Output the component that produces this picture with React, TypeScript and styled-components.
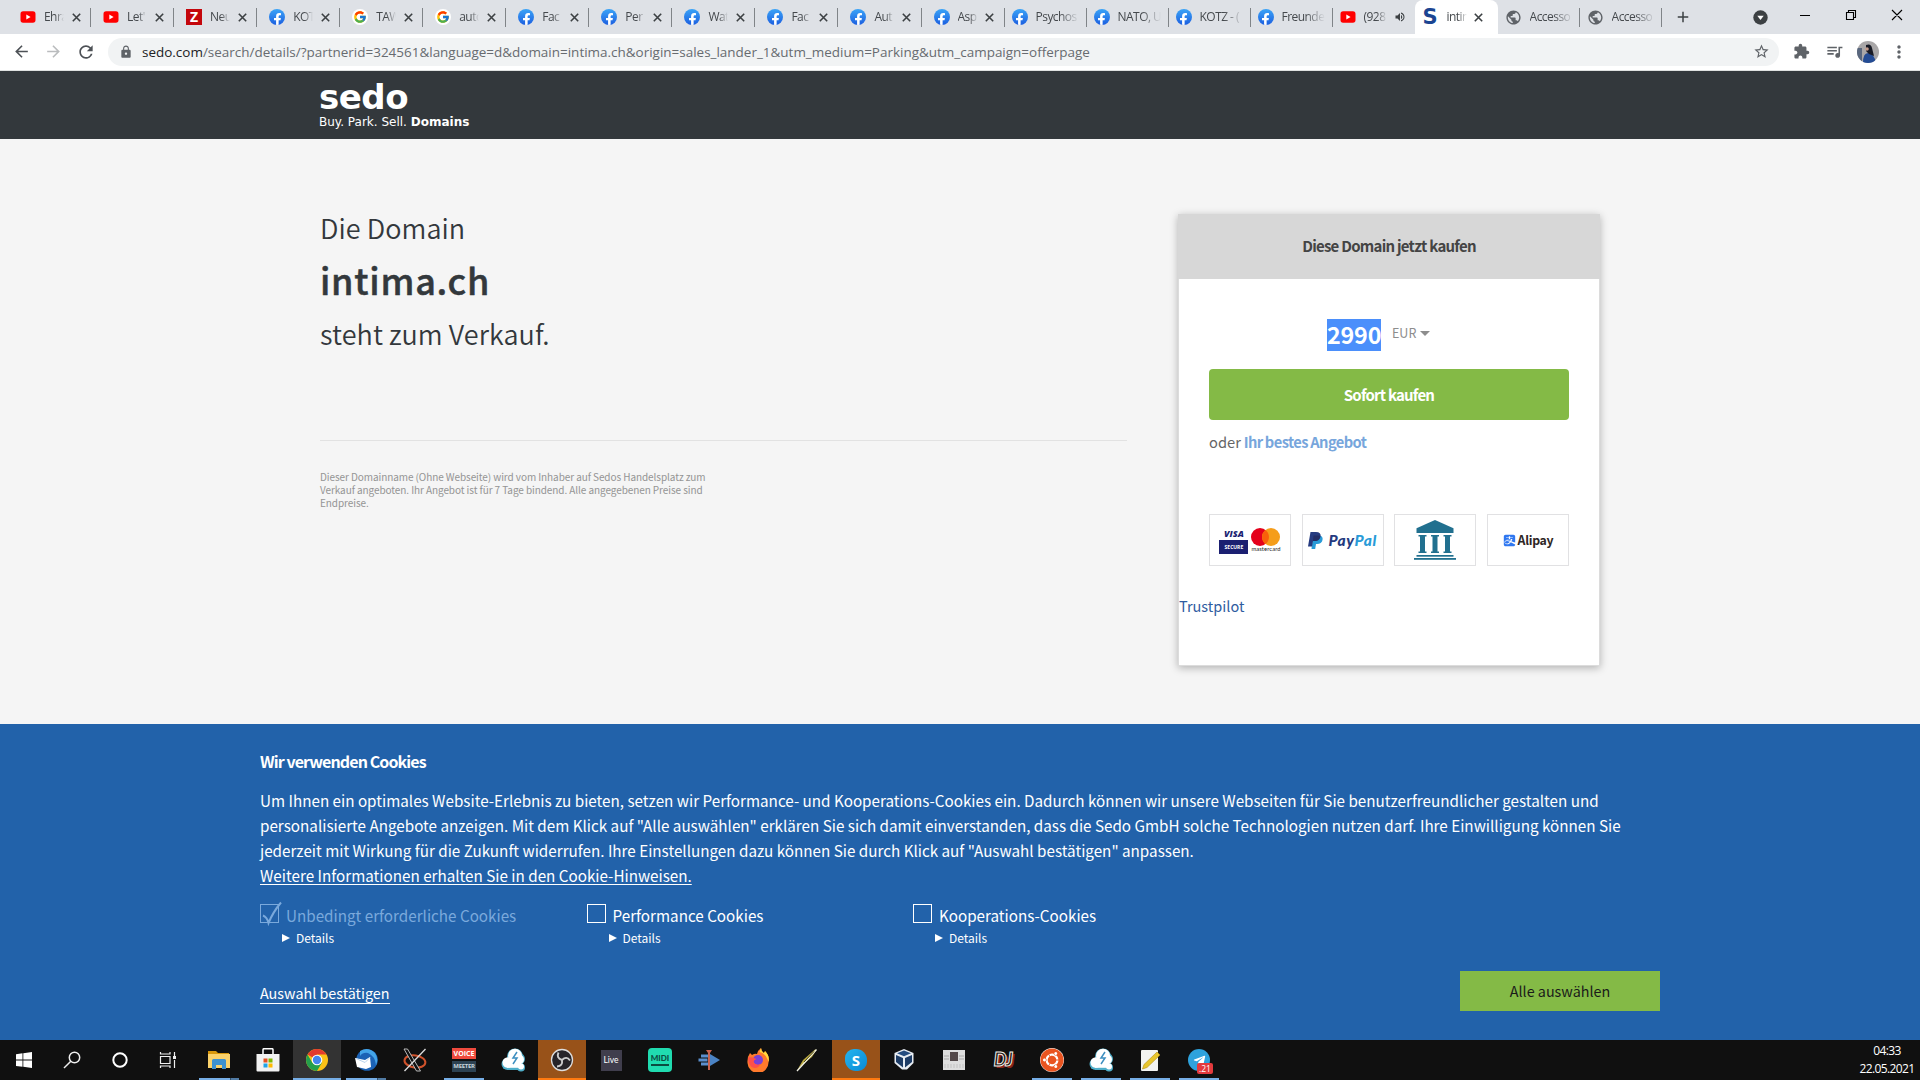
import React from "react";
import styled, { createGlobalStyle } from "styled-components";
import { MdArrowBack, MdArrowForward, MdRefresh, MdLock, MdStarBorder, MdExtension, MdQueueMusic, MdMoreVert, MdAdd, MdVolumeUp, MdPublic } from "react-icons/md";
import { FcGoogle } from "react-icons/fc";
import { FaFacebookF, FaAlipay, FaTelegramPlane, FaUbuntu } from "react-icons/fa";

const ui = `"Open Sans", "Noto Sans", sans-serif`;
const sans = `"Noto Sans CJK SC", "Noto Sans", sans-serif`;

const Global = createGlobalStyle`
  * { box-sizing: border-box; }
  body { margin: 0; background: #f5f5f5; overflow: hidden; font-family: ${sans}; }
  svg { display: block; flex: none; }
`;

const Screen = styled.div`
  width: 1920px;
  height: 1080px;
  display: flex;
  flex-direction: column;
  overflow: hidden;
`;

/* ---------- browser chrome ---------- */
const TabStrip = styled.div`
  height: 34px;
  flex: none;
  display: flex;
  background: #dee1e6;
  padding-left: 8px;
  font: 12px/34px ${ui};
  color: #45494d;
`;
const TabBox = styled.div<{ $wide: boolean; $active?: boolean; $line: boolean }>`
  width: ${(p) => (p.$wide ? 83.05 : 82)}px;
  height: 34px;
  display: flex;
  align-items: center;
  padding-left: ${(p) => (p.$active ? 8 : p.$wide ? 12 : 7)}px;
  background: ${(p) => (p.$active ? "#fff" : "none")};
  border-radius: ${(p) => (p.$active ? "8px 8px 0 0" : "0")};
  position: relative;
  &::after {
    content: "";
    display: ${(p) => (p.$line ? "block" : "none")};
    position: absolute;
    right: 0;
    top: 8px;
    width: 1px;
    height: 19px;
    background: #808488;
  }
`;
const TabLabel = styled.span<{ $w: number }>`
  width: ${(p) => p.$w}px;
  margin-left: 8px;
  white-space: nowrap;
  letter-spacing: -0.55px;
  mask-image: linear-gradient(to right, #000 55%, transparent 100%);
`;
const TabEnd = styled.span`
  margin-left: 7.5px;
  color: #3c4043;
`;
const StripButton = styled.span<{ $ml: number }>`
  margin-left: ${(p) => p.$ml}px;
  align-self: center;
  color: #3c4043;
`;
const Toolbar = styled.div`
  height: 37px;
  flex: none;
  display: flex;
  align-items: center;
  background: #fff;
  padding: 0 0 1px 12px;
  color: #5f6368;
  border-bottom: 1px solid #dfe1e0;
`;
const NavIcon = styled.span<{ $faded?: boolean }>`
  width: 32px;
  flex: none;
  display: flex;
  color: ${(p) => (p.$faded ? "#babcbe" : "#4d5156")};
`;
const Address = styled.div`
  width: 1671px;
  flex: none;
  height: 28px;
  margin-right: 14px;
  border-radius: 14px;
  background: #f1f3f4;
  display: flex;
  align-items: center;
  padding: 0 9px 0 11px;
  font: 13.48px/28px ${ui};
`;
const Url = styled.span`
  flex: 1;
  margin-left: 9px;
  color: #676b70;
  white-space: nowrap;
  b { font-weight: 400; color: #202124; }
`;
const ToolIcon = styled.span`
  width: 32px;
  flex: none;
  display: flex;
`;

/* ---------- page ---------- */
const SiteHeader = styled.header`
  height: 68px;
  flex: none;
  background: #33383c;
  padding: 9px 0 0 319px;
  color: #fff;
  font-family: "DejaVu Sans", Verdana, sans-serif;
`;
const Logo = styled.div`
  font-size: 34px;
  line-height: 34px;
  font-weight: 700;
  letter-spacing: -0.5px;
`;
const Slogan = styled.div`
  font-size: 12px;
  line-height: 14px;
  margin-top: 1px;
`;
const Main = styled.main`
  height: 585px;
  flex: none;
  display: flex;
  align-items: flex-start;
  background: #f5f5f5;
  padding-left: 320px;
`;
const Offer = styled.section`
  width: 807px;
  padding-top: 69px;
  color: #33383c;
`;
const Lead = styled.div<{ $ls: number }>`
  font-size: 27px;
  line-height: 40px;
  font-weight: 350;
  letter-spacing: ${(p) => p.$ls}px;
`;
const DomainName = styled.h1`
  margin: 6px 0 10px;
  font-size: 36px;
  line-height: 50px;
  font-weight: 500;
  letter-spacing: 0.75px;
  -webkit-text-stroke: 0.5px #33383c;
`;
const Legal = styled.p`
  margin: 86px 0 0;
  border-top: 1px solid #e2e2e2;
  padding-top: 29px;
  font-size: 10px;
  line-height: 13px;
  letter-spacing: -0.08px;
  color: #949494;
  white-space: nowrap;
`;
const Card = styled.aside`
  width: 422px;
  height: 452px;
  margin: 75px 0 0 51px;
  background: #fff;
  border: 1px solid #dcdcdc;
  box-shadow: 0 2px 8px rgba(0, 0, 0, 0.28);
  color: #666;
`;
const CardTitle = styled.div`
  height: 65px;
  margin: -1px -1px 0;
  background: #d7d7d7;
  color: #444;
  font-size: 15px;
  line-height: 64px;
  font-weight: 700;
  text-align: center;
  letter-spacing: -0.75px;
`;
const PriceRow = styled.div`
  display: flex;
  height: 32px;
  margin: 40px 0 18px 148px;
`;
const Price = styled.span`
  width: 54px;
  background: #4b8ffb;
  color: #fff;
  font-size: 23.3px;
  line-height: 30px;
  font-weight: 700;
  letter-spacing: -0.2px;
`;
const Currency = styled.span`
  display: flex;
  align-items: center;
  gap: 4px;
  margin-left: 11px;
  font-size: 12.5px;
  line-height: 28px;
  height: 28px;
  color: #8d8d8d;
`;
const Caret = styled.span`
  border: 5px solid transparent;
  border-top-color: #8d8d8d;
  border-bottom: 0;
  margin-top: 1px;
`;
const CardBody = styled.div`
  padding: 0 30px;
`;
const BuyButton = styled.div`
  height: 51px;
  border-radius: 4px;
  background: #84ba46;
  color: #fff;
  text-align: center;
  font-size: 15px;
  line-height: 51px;
  font-weight: 700;
  letter-spacing: -0.8px;
`;
const BestOffer = styled.div`
  margin: 10px 0 60px;
  font-size: 14.7px;
  line-height: 24px;
  word-spacing: -0.5px;
  b { color: #77a6dc; letter-spacing: -0.58px; }
`;
const Payments = styled.div`
  display: flex;
  justify-content: space-between;
`;
const PayBox = styled.div`
  width: 82px;
  height: 52px;
  border: 1px solid #e1e1e3;
  display: flex;
  align-items: center;
  justify-content: center;
`;
const VisaCol = styled.div`
  width: 29px;
  margin-right: 3px;
  font: italic 800 9px/13px "Open Sans", sans-serif;
  color: #1b1f71;
  text-align: center;
`;
const Secure = styled.div`
  height: 14px;
  background: #1b1f71;
  color: #fff;
  font: 700 5px/14px "Open Sans", sans-serif;
`;
const MasterCol = styled.div`
  font: 5.8px/6px Lato, sans-serif;
  letter-spacing: 0.1px;
  color: #222;
  text-align: center;
`;
const PayPalText = styled.span`
  margin-left: 5px;
  font: italic 900 15.5px/18px Lato, sans-serif;
  letter-spacing: 0.6px;
  color: #253b80;
  i { color: #299bd8; }
`;
const AlipayText = styled.span`
  margin-left: 2px;
  font: 700 12.3px/16px "Noto Sans CJK SC", sans-serif;
  color: #2f2725;
  letter-spacing: -0.3px;
`;
const Trust = styled.div`
  margin: 28px 0 0;
  font-size: 14.5px;
  line-height: 24px;
  color: #2f5c9f;
`;

/* ---------- cookie notice ---------- */
const Cookies = styled.section`
  height: 316px;
  flex: none;
  background: #2262aa;
  color: #fff;
  padding: 25px 260px 0;
  font-size: 15.22px;
`;
const CookieTitle = styled.h2`
  margin: 0 0 14px;
  font-size: 16px;
  line-height: 25px;
  font-weight: 700;
  letter-spacing: -0.9px;
`;
const Line = styled.div`
  line-height: 25px;
  white-space: nowrap;
`;
const Link = styled.span`
  text-decoration: underline;
  text-underline-offset: 2px;
`;
const Choices = styled.div`
  display: flex;
  margin: 16px 0 23px;
`;
const Choice = styled.div`
  width: 326.5px;
`;
const ChoiceName = styled.div<{ $off?: boolean }>`
  display: flex;
  line-height: 23px;
  height: 24px;
  gap: 6px;
  color: ${(p) => (p.$off ? "#7aa9dc" : "#fff")};
`;
const Details = styled.div`
  display: flex;
  align-items: center;
  gap: 6px;
  padding-left: 22px;
  font-size: 12px;
  line-height: 20px;
`;
const Actions = styled.div`
  display: flex;
  justify-content: space-between;
  font-size: 14.35px;
`;
const Confirm = styled.span`
  height: 23px;
  margin-top: 10px;
  line-height: 24px;
  border-bottom: 1px solid #fff;
`;
const AcceptAll = styled.span`
  width: 200px;
  height: 40px;
  background: #84ba46;
  color: #1a1a1a;
  text-align: center;
  line-height: 39px;
`;

/* ---------- taskbar ---------- */
const Taskbar = styled.footer`
  height: 40px;
  flex: none;
  display: flex;
  background: #101010;
`;
const Slot = styled.div<{ $bg?: string; $bar?: string; $full?: boolean; $gap?: number }>`
  width: 48px;
  height: 40px;
  margin-right: ${(p) => p.$gap ?? 1}px;
  display: flex;
  align-items: center;
  justify-content: center;
  background: ${(p) =>
    p.$bar
      ? `linear-gradient(90deg, ${p.$bar}) center bottom / ${p.$full ? 48 : 40}px 2px no-repeat, ${p.$bg ?? "none"}`
      : p.$bg ?? "none"};
`;
const Clock = styled.div`
  margin-left: auto;
  width: 66px;
  padding-top: 2px;
  text-align: center;
  color: #fff;
  font: 12px/18px ${ui};
  letter-spacing: -0.6px;
`;

const YouTube = () => (
  <svg width="16" height="16" viewBox="0 0 16 16"><rect x="0.5" y="2.3" width="15" height="11.4" rx="2.6" fill="#f00" /><path d="M6.3 5.6v4.8L10.6 8z" fill="#fff" /></svg>
);
const Close = () => (
  <svg width="9" height="9" viewBox="0 0 9 9"><path d="M.8.8l7.400 7.400M8.200.8L.8 8.200" stroke="currentColor" strokeWidth="1.600" /></svg>
);
const FbCircle = styled.span`
  width: 16px;
  height: 16px;
  border-radius: 50%;
  overflow: hidden;
  background: linear-gradient(#3ba4f7, #1c5fe0);
  color: #fff;
  display: flex;
  justify-content: center;
  align-items: flex-end;
  svg { margin-bottom: -1px; }
`;
const GoogleCircle = styled.span`
  width: 16px;
  height: 16px;
  border-radius: 50%;
  background: #fff;
  display: flex;
  align-items: center;
  justify-content: center;
`;
const ZIcon = styled.span`
  width: 16px;
  height: 16px;
  background: #c4070c;
  color: #fff;
  text-align: center;
  font: 700 14px/16px "Open Sans", sans-serif;
`;
const SIcon = styled.span`
  width: 16px;
  color: #1b4592;
  font: 700 21px/16px "DejaVu Sans", sans-serif;
`;
const Favicon = ({ kind }: { kind: string }) => {
  if (kind === "y") return <YouTube />;
  if (kind === "f") return <FbCircle><FaFacebookF size={13} /></FbCircle>;
  if (kind === "g") return <GoogleCircle><FcGoogle size={14} /></GoogleCircle>;
  if (kind === "z") return <ZIcon>Z</ZIcon>;
  if (kind === "s") return <SIcon>S</SIcon>;
  return <MdPublic size={17} color="#5f6368" />;
};

type Tab = { icon: string; label: string; wide?: boolean; active?: boolean; sound?: boolean; line?: boolean };
const tabs: Tab[] = [
  ...["y|Ehra", "y|Let'", "z|Neu", "f|KOT", "g|TAW", "g|auto", "f|Fac", "f|Per", "f|Wat", "f|Fac", "f|Aut", "f|Asp"].map((t) => ({ icon: t[0], label: t.slice(2), wide: true })),
  { icon: "f", label: "Psychos" },
  { icon: "f", label: "NATO, U" },
  { icon: "f", label: "KOTZ - (" },
  { icon: "f", label: "Freunde" },
  { icon: "y", label: "(928", sound: true, line: false },
  { icon: "s", label: "intim", wide: true, active: true, line: false },
  { icon: "w", label: "Accesso" },
  { icon: "w", label: "Accesso" },
];

const CheckBox = ({ checked }: { checked?: boolean }) => (
  <svg width="20" height="23" viewBox="0 0 20 23" overflow="visible">
    <rect x="0.5" y="0.5" width="18" height="18" fill="none" stroke={checked ? "#7aa9dc" : "#fff"} />
    {checked && <path d="M3 11.5Q7 13 8.5 19Q13 8 21-1.5" fill="none" stroke="#7aa9dc" strokeWidth="2" />}
  </svg>
);
const Marker = () => (
  <svg width="8" height="8" viewBox="0 0 8 8"><path d="M0 0l8 4-8 4z" fill="#fff" /></svg>
);

const Bank = () => (
  <svg width="42" height="40" viewBox="0 0 42 40" fill="#21708f">
    <path d="M2.5 8.3L21 0l18.500 8.300V13h-37z" />
    {[4.5, 17, 29.500].map((x) => (
      <path key={x} d={`M${x} 15h8v1.600h-1.500V31.500h1.500V33h-8v-1.500h1.500V16.600h-1.500z`} />
    ))}
    <rect x="2.500" y="35" width="37" height="1.700" />
    <rect x="0" y="38" width="42" height="1.800" />
  </svg>
);

const PayPalMark = () => (
  <svg width="15" height="17" viewBox="0 0 15 17">
    <path d="M5 3.500h6.500c2.500.5 3.500 2 3 4.500-.5 2.500-2.500 4-5.500 4H8l-.8 5H3.500z" fill="#299bd8" />
    <path d="M2.500 0H8c3.500 0 5 1.500 4.500 4.500C12 7.800 9.800 9 6.500 9H5l-1 5.500H0z" fill="#253b80" />
    <path d="M5.500 3.500h6.800c-.2 4-2.600 5.500-5.800 5.500H5z" fill="#222d65" />
  </svg>
);

/* taskbar glyphs, each drawn on a 24px grid */
const G = ({ children }: { children: React.ReactNode }) => <svg width="24" height="24" viewBox="0 0 24 24">{children}</svg>;
const Windows = () => <G><path fill="#fff" d="M4 6.200l6.500-.9v6.300H4zM11.300 5.200L20 4v7.600h-8.700zM4 12.500h6.500v6.300L4 17.900zM11.300 12.500H20V20l-8.700-1.200z" /></G>;
const Search = () => <G><g fill="none" stroke="#eee" strokeWidth="1.500"><circle cx="14.500" cy="9.500" r="5.200" /><path d="M10.800 13.200L4 20" /></g></G>;
const Cortana = () => <G><circle cx="12" cy="12" r="6.700" fill="none" stroke="#fff" strokeWidth="2" /></G>;
const TaskView = () => <G><g fill="none" stroke="#eee" strokeWidth="1.200"><path d="M4.500 8.500h9.500v7H4.500zM4.500 4v2h9.500V4M4.500 20v-2h9.500v2M18.500 4v4M18.500 12v8" /></g><rect x="17" y="8" width="3" height="3" fill="#eee" /></G>;
const Explorer = () => <G><path d="M1 3h8l2 2h11v3H1z" fill="#d9980c" /><path d="M1 6h22v14H1z" fill="#fbd26b" /><path d="M5 20v-7.500q0-1.500 1.500-1.500h11q1.500 0 1.500 1.500V21h-4v-4H9v4H5z" fill="#3d91d0" /></G>;
const Store = () => <G><path d="M7 7V1.800Q7 .7 8 .7h8q1 0 1 1.100V7" fill="none" stroke="#fff" strokeWidth="1.500" /><path d="M.5 6h23v16.500q0 1-1 1h-21q-1 0-1-1z" fill="#f2f2f2" /><path d="M7.500 10.500h4v4h-4z" fill="#e65122" /><path d="M12.500 10.500h4v4h-4z" fill="#7fba00" /><path d="M7.500 15.500h4v4h-4z" fill="#1fa4e8" /><path d="M12.500 15.500h4v4h-4z" fill="#ffb900" /></G>;
const Chrome = () => <G><circle cx="12" cy="12" r="11" fill="#fbc116" /><path d="M12 12L2.500 6.500A11 11 0 0 1 21.500 6.500H12z" fill="#e33b2e" /><path d="M2.500 6.500A11 11 0 0 0 12 23l5-8.500L12 12 7.500 15z" fill="#249f4c" /><circle cx="12" cy="12" r="5.300" fill="#fff" /><circle cx="12" cy="12" r="4.200" fill="#4486ee" /></G>;
const Thunderbird = () => <G><circle cx="13" cy="12" r="10.800" fill="#1b62b5" /><path d="M6 3Q14-2 21 5q4 6 1 12Q21 8 14 5 9 4 6 8z" fill="#43a4e8" /><path d="M1 10l10 2 5-3 1 10-5 2-9-2z" fill="#fff" /><path d="M2 10.500l9 4 5-5" fill="none" stroke="#b9d4ec" /></G>;
const XOrg = () => <G><ellipse cx="12" cy="13.500" rx="10.500" ry="6" transform="rotate(8 12 13)" fill="none" stroke="#d0522b" strokeWidth="2" /><path d="M1 1h3.500l13 22h-4z" fill="#111" stroke="#ccc" strokeWidth=".9" /><path d="M22.500 1L1.500 23" stroke="#ddd" strokeWidth="1.300" /></G>;
const VoiceBox = styled.div`
  width: 24px;
  text-align: center;
  color: #fff;
  font: 700 7px/11px "Open Sans", sans-serif;
  background: linear-gradient(#ef4a3d 0 11px, #101010 11px 13px, #2d4252 13px);
  div + div { margin-top: 2px; font-size: 6px; color: #c8d4dc; letter-spacing: -0.3px; }
`;
const Cloud = () => <G><g fill="#4faec9"><circle cx="6.500" cy="16" r="6" /><circle cx="14" cy="8.500" r="8" /><circle cx="18" cy="11" r="6" /><circle cx="20" cy="19.500" r="4" /><path d="M6 14h14v8H6z" /></g><g fill="#fff"><circle cx="6.800" cy="14.500" r="5.300" /><circle cx="14" cy="7.800" r="7" /><circle cx="18" cy="11.500" r="5" /><circle cx="20" cy="18.500" r="3" /><path d="M6 12h13v7.800H6z" /></g><path d="M16 4l-4 6h4l-4 6" fill="none" stroke="#3d8fc0" strokeWidth="1.500" /></G>;
const Obs = () => <G><circle cx="12" cy="12" r="10.500" fill="#262429" stroke="#ddd" strokeWidth="1.300" /><g fill="none" stroke="#ccc" strokeWidth="1.900"><path d="M12 12Q6 10 8.500 4.500" /><path d="M12 12q4.500-4.500 8 .5" /><path d="M12 12q1 6-5 6.500" /></g></G>;
const LiveBox = styled.div`
  width: 21px;
  height: 21px;
  background: #403e4d;
  color: #fff;
  text-align: center;
  font: 8.5px/21px Lato, sans-serif;
`;
const MidiBox = styled.div`
  width: 24px;
  height: 24px;
  border-radius: 4px;
  background: #20dcb0;
  color: #0b4c40;
  text-align: center;
  font: 900 8px/20px Lato, sans-serif;
  &::after { content: ""; display: block; height: 2px; margin: -4px 3px 0; background: #0b4c40; }
`;
const Arrow = () => <G><path d="M4 6.500h7v3H4zM1.500 10.500h9v3h-9zM4 14.500h7v3H4z" fill="#5b8fce" /><path d="M13 6l10 6-10 6z" fill="#4b83c4" /><path d="M9 2h6l-2 3v17h-2V5z" fill="#c96350" /></G>;
const Firefox = () => <G><path d="M4 5l2 2q3-2 5-1 1-4 4-6 0 3 3 5 1-1 1-2 5 5 3.500 11A10.500 10.500 0 0 1 1.500 15Q1 9 4 5z" fill="#ff7a2c" /><path d="M15 0q0 3 3 5l1-2q5 5 3.500 11-3-9-9-10z" fill="#ffd83d" /><circle cx="12" cy="12" r="5" fill="#7a40d6" /><path d="M2.500 9q4 0 8 2-3 1-3 3 2 4 7 2-3 6-9 3-4-4-3-10z" fill="#ff4f4a" /></G>;
const Feather = () => <G><path d="M2 22.500L8 12 20 1.500l1.500.5L17 9 6 18z" fill="#b9a93f" /><path d="M2 23L21.500 1.500" stroke="#f2f2e6" strokeWidth="1.300" /><path d="M9 14L19 3.500" stroke="#4d4718" /></G>;
const SkypeMark = styled.div`
  width: 22px;
  height: 22px;
  border-radius: 9px 50% 9px 50%;
  background: linear-gradient(135deg, #25b4ee, #0a8ad6);
  color: #fff;
  text-align: center;
  font: 700 15px/22px "Open Sans", sans-serif;
`;
const Cube = () => <G><path d="M11 1l9.500 4v10L14 21.500h-5L1.500 15V5z" fill="#e8edf3" /><path d="M3 7l7 3v9.500L3 14zM19 7l-7 3v9.500l7-5.500z" fill="#1d3c66" /><path d="M4 5.200L11 2.500l7 2.700-7 3z" fill="#244c80" /></G>;
const Mixer = () => <G><rect x="1" y="2" width="22" height="20" fill="#dedede" /><rect x="8" y="4" width="8" height="9" fill="#54494a" /><path d="M2 8h5M17 8h5M2 11h5M17 11h5" stroke="#aaa" /><path d="M3 16v4M6 16v4M9 16v4M12 16v4M15 16v4M18 16v4M21 16v4" stroke="#c2c2c2" /></G>;
const DjMark = styled.div`
  width: 24px;
  height: 24px;
  display: flex;
  justify-content: center;
  color: #16110f;
  font: italic 900 18px/23px Lato, sans-serif;
  letter-spacing: -0.5px;
  -webkit-text-stroke: 1px #f3efe8;
  text-shadow: 2px 2px 0 #8a241a;
`;
const UbuntuDisc = styled.div`
  width: 24px;
  height: 24px;
  border-radius: 50%;
  background: #fff;
  color: #e95420;
`;
const Note = () => <G><rect x="3" y="2" width="17" height="21" rx="1" fill="#f3f3f0" /><path d="M19 4l3 3L9 19.500 4.500 21 6 16.500z" fill="#e8c52c" stroke="#b48f13" strokeWidth=".6" /></G>;
const TelegramDisc = styled.div`
  width: 22px;
  height: 22px;
  border-radius: 50%;
  background: #2ea2dc;
  color: #fff;
  display: flex;
  align-items: center;
  justify-content: center;
  position: relative;
`;
const Badge = styled.span`
  position: absolute;
  left: 9px;
  top: 14px;
  width: 16px;
  height: 11px;
  border-radius: 2px;
  background: #e33a3d;
  font: 8.5px/11px ${ui};
  text-align: center;
`;

const running = "#76aee6, #76aee6";
const stacked = "#76aee6 31px, #33506b 31px 32px, #517ba4 32px";
const alert = "#ff7a10, #ff7a10";
const apps: { node: React.ReactNode; bg?: string; bar?: string; full?: boolean }[] = [
  { node: <Explorer />, bar: stacked },
  { node: <Store /> },
  { node: <Chrome />, bg: "#333", bar: running, full: true },
  { node: <Thunderbird />, bar: stacked },
  { node: <XOrg /> },
  { node: <VoiceBox><div>VOICE</div><div>MEETER</div></VoiceBox>, bar: running },
  { node: <Cloud /> },
  { node: <Obs />, bg: "#985219", bar: alert, full: true },
  { node: <LiveBox>Live</LiveBox> },
  { node: <MidiBox>MIDI</MidiBox> },
  { node: <Arrow /> },
  { node: <Firefox /> },
  { node: <Feather /> },
  { node: <SkypeMark>S</SkypeMark>, bg: "#985219", bar: alert, full: true },
  { node: <Cube /> },
  { node: <Mixer /> },
  { node: <DjMark>DJ</DjMark> },
  { node: <UbuntuDisc><FaUbuntu size={24} /></UbuntuDisc>, bar: running },
  { node: <Cloud />, bar: running },
  { node: <Note />, bar: running },
  { node: <TelegramDisc><FaTelegramPlane size={13} /><Badge>.21</Badge></TelegramDisc>, bar: running },
];

export default function App() {
  return (
    <Screen>
      <Global />
      <TabStrip>
        {tabs.map((t, i) => (
          <TabBox key={i} $wide={!!t.wide} $active={t.active} $line={t.line !== false}>
            <Favicon kind={t.icon} />
            <TabLabel $w={t.wide ? 20 : t.sound ? 23 : 43}>{t.label}</TabLabel>
            {t.wide && <TabEnd><Close /></TabEnd>}
            {t.sound && <TabEnd><MdVolumeUp size={12} /></TabEnd>}
          </TabBox>
        ))}
        <StripButton $ml={12}><MdAdd size={18} /></StripButton>
        <StripButton $ml={61}>
          <svg width="15" height="15" viewBox="0 0 15 15"><circle cx="7.500" cy="7.500" r="7.200" fill="#3c4043" /><path d="M4.300 5.800h6.400L7.500 10z" fill="#fff" /></svg>
        </StripButton>
        <StripButton $ml={31}>
          <svg width="104" height="16" viewBox="0 0 104 16" fill="none" stroke="#000" strokeWidth="1.100">
            <path d="M1 6.500h10M47.500 3.500h7v7h-7zM49.500 3.500v-2h7v7h-2M93 1l10 10M103 1L93 11" />
          </svg>
        </StripButton>
      </TabStrip>
      <Toolbar>
        <NavIcon><MdArrowBack size={19} /></NavIcon>
        <NavIcon $faded><MdArrowForward size={19} /></NavIcon>
        <NavIcon><MdRefresh size={20} /></NavIcon>
        <Address>
          <MdLock size={14} color="#5f6368" />
          <Url><b>sedo.com</b>/search/details/?partnerid=324561&amp;language=d&amp;domain=intima.ch&amp;origin=sales_lander_1&amp;utm_medium=Parking&amp;utm_campaign=offerpage</Url>
          <MdStarBorder size={17} color="#5f6368" />
        </Address>
        <ToolIcon><MdExtension size={17} /></ToolIcon>
        <ToolIcon><MdQueueMusic size={19} /></ToolIcon>
        <ToolIcon>
          <svg width="22" height="22" viewBox="0 0 22 22"><defs><clipPath id="av"><circle cx="11" cy="11" r="11" /></clipPath></defs><g clipPath="url(#av)"><path d="M0 0h22v22H0z" fill="#a9a7a8" /><path d="M0 7h5v15H0z" fill="#59677e" /><path d="M6 22q0-10 5-10 6 0 8 10z" fill="#234b94" /><path d="M9 4q5-2 6 3l2 8-5-2-3-3z" fill="#171a25" /><circle cx="10" cy="8" r="1.800" fill="#c49c8c" /></g></svg>
        </ToolIcon>
        <ToolIcon><MdMoreVert size={20} /></ToolIcon>
      </Toolbar>

      <SiteHeader>
        <Logo>sedo</Logo>
        <Slogan>Buy. Park. Sell. <b>Domains</b></Slogan>
      </SiteHeader>

      <Main>
        <Offer>
          <Lead $ls={0.05}>Die Domain</Lead>
          <DomainName>intima.ch</DomainName>
          <Lead $ls={0.08}>steht zum Verkauf.</Lead>
          <Legal>
            Dieser Domainname (Ohne Webseite) wird vom Inhaber auf Sedos Handelsplatz zum<br />
            Verkauf angeboten. Ihr Angebot ist für 7 Tage bindend. Alle angegebenen Preise sind<br />
            Endpreise.
          </Legal>
        </Offer>
        <Card>
          <CardTitle>Diese Domain jetzt kaufen</CardTitle>
          <PriceRow>
            <Price>2990</Price>
            <Currency>EUR<Caret /></Currency>
          </PriceRow>
          <CardBody>
            <BuyButton>Sofort kaufen</BuyButton>
            <BestOffer>oder <b>Ihr bestes Angebot</b></BestOffer>
            <Payments>
              <PayBox>
                <VisaCol>VISA<Secure>SECURE</Secure></VisaCol>
                <MasterCol>
                  <svg width="29" height="18" viewBox="0 0 29 18"><circle cx="9" cy="9" r="9" fill="#e4001b" /><circle cx="20" cy="9" r="9" fill="#f59d1a" /><path d="M14.500 1.900a9 9 0 0 1 0 14.200 9 9 0 0 1 0-14.200z" fill="#f9600a" /></svg>
                  mastercard
                </MasterCol>
              </PayBox>
              <PayBox><PayPalMark /><PayPalText>Pay<i>Pal</i></PayPalText></PayBox>
              <PayBox><Bank /></PayBox>
              <PayBox><FaAlipay size={13} color="#2f77f0" /><AlipayText>Alipay</AlipayText></PayBox>
            </Payments>
          </CardBody>
          <Trust>Trustpilot</Trust>
        </Card>
      </Main>

      <Cookies>
        <CookieTitle>Wir verwenden Cookies</CookieTitle>
        <Line>Um Ihnen ein optimales Website-Erlebnis zu bieten, setzen wir Performance- und Kooperations-Cookies ein. Dadurch können wir unsere Webseiten für Sie benutzerfreundlicher gestalten und</Line>
        <Line>personalisierte Angebote anzeigen. Mit dem Klick auf "Alle auswählen" erklären Sie sich damit einverstanden, dass die Sedo GmbH solche Technologien nutzen darf. Ihre Einwilligung können Sie</Line>
        <Line>jederzeit mit Wirkung für die Zukunft widerrufen. Ihre Einstellungen dazu können Sie durch Klick auf "Auswahl bestätigen" anpassen.</Line>
        <Line><Link>Weitere Informationen erhalten Sie in den Cookie-Hinweisen.</Link></Line>
        <Choices>
          {["Unbedingt erforderliche Cookies", "Performance Cookies", "Kooperations-Cookies"].map((name, i) => (
            <Choice key={name}>
              <ChoiceName $off={i === 0}><CheckBox checked={i === 0} />{name}</ChoiceName>
              <Details><Marker />Details</Details>
            </Choice>
          ))}
        </Choices>
        <Actions>
          <Confirm>Auswahl bestätigen</Confirm>
          <AcceptAll>Alle auswählen</AcceptAll>
        </Actions>
      </Cookies>

      <Taskbar>
        {[Windows, Search, Cortana, TaskView].map((Icon, i) => (
          <Slot key={i} $gap={i === 3 ? 3 : 0}><Icon /></Slot>
        ))}
        {apps.map((a, i) => (
          <Slot key={i} $bg={a.bg} $bar={a.bar} $full={a.full}>{a.node}</Slot>
        ))}
        <Clock>04:33<br />22.05.2021</Clock>
      </Taskbar>
    </Screen>
  );
}
